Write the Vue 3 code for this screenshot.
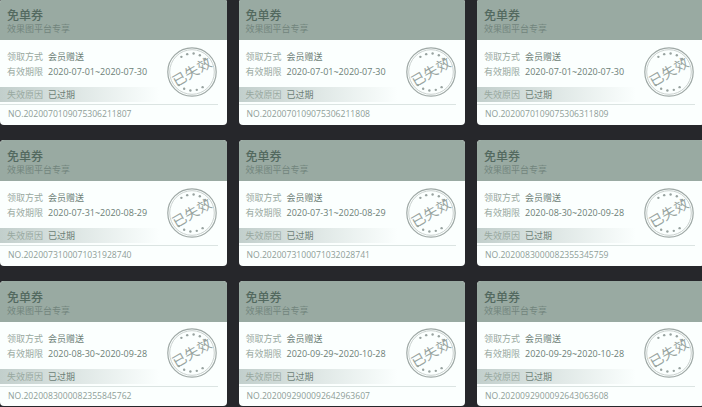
<template>
  <div class="page">
    <div v-for="c in coupons" :key="c.no" class="coupon">
      <div class="coupon-head">
        <div class="title">免单券</div>
        <div class="sub">效果图平台专享</div>
      </div>
      <div class="coupon-body">
        <div class="row">
          <span class="label">领取方式</span>
          <span class="value">会员赠送</span>
        </div>
        <div class="row">
          <span class="label">有效期限</span>
          <span class="value">{{ c.date }}</span>
        </div>
        <div class="row reason">
          <span class="label">失效原因</span>
          <span class="value">已过期</span>
        </div>
        <div class="no">NO.{{ c.no }}</div>
        <svg class="stamp" viewBox="0 0 50 50">
          <circle cx="25" cy="25" r="24.2" fill="none" stroke="#9fa9a6" stroke-width="1.2" />
          <circle cx="25" cy="25" r="22.3" fill="none" stroke="#b4bdba" stroke-width="0.7" />
          <circle v-for="(d, i) in dots" :key="i" :cx="d.x" :cy="d.y" r="1.2" fill="#98a3a0" />
          <text x="25" y="30" text-anchor="middle" transform="rotate(-30 25 25)" class="stamp-text">已失效</text>
        </svg>
      </div>
    </div>
  </div>
</template>

<script setup>
const list = [
  ['2020-07-01~2020-07-30', '2020070109075306211807'],
  ['2020-07-01~2020-07-30', '2020070109075306211808'],
  ['2020-07-01~2020-07-30', '2020070109075306311809'],
  ['2020-07-31~2020-08-29', '2020073100071031928740'],
  ['2020-07-31~2020-08-29', '2020073100071032028741'],
  ['2020-08-30~2020-09-28', '2020083000082355345759'],
  ['2020-08-30~2020-09-28', '2020083000082355845762'],
  ['2020-09-29~2020-10-28', '2020092900092642963607'],
  ['2020-09-29~2020-10-28', '2020092900092643063608']
]

const coupons = list.map(([date, no]) => ({ date, no }))

// dots sit in two arcs, above and below the stamp text
const dots = [-125, -105, -85, -65, -45, 55, 75, 95, 115, 135].map((deg) => {
  const rad = (deg * Math.PI) / 180
  return { x: 25 + 18.5 * Math.cos(rad), y: 25 + 18.5 * Math.sin(rad) }
})
</script>

<style>
html,
body {
  margin: 0;
  background: #26272b;
  overflow: hidden;
}
</style>

<style scoped>
.page {
  display: grid;
  grid-template-columns: repeat(3, 226.5px);
  column-gap: 12px;
  row-gap: 15.3px;
  margin-top: -0.7px;
  font-family: "Noto Sans CJK SC", "Noto Sans", sans-serif;
}

.coupon {
  height: 125.5px;
  border-radius: 4px;
  overflow: hidden;
  background: #fbfffe;
  display: flex;
  flex-direction: column;
}

.coupon-head {
  height: 41px;
  background: #99aaa2;
  padding: 8px 0 0 7px;
  box-sizing: border-box;
  flex-shrink: 0;
}

.title {
  font-size: 12px;
  line-height: 16px;
  font-weight: 500;
  color: #53695f;
}

.sub {
  font-size: 9px;
  line-height: 12px;
  color: #72857d;
}

.coupon-body {
  position: relative;
  padding-top: 9px;
}

.row {
  display: flex;
  gap: 5px;
  padding-left: 7px;
  height: 15px;
  align-items: center;
  font-size: 9px;
}

.label {
  color: #98a89f;
}

.value {
  color: #6c7e76;
  font-family: "Open Sans", "Noto Sans CJK SC", sans-serif;
}

.reason {
  margin-top: 8px;
  background: linear-gradient(90deg, #c2cfcc, #fbfffe 70%);
}

.no {
  margin: 2px 9px 0 0;
  padding: 2px 0 0 8px;
  border-top: 1px solid #dbe4e2;
  font-family: "Open Sans", "Noto Sans", sans-serif;
  font-size: 8.6px;
  line-height: 14px;
  color: #8f9e98;
}

.stamp {
  position: absolute;
  left: 167px;
  top: 6.5px;
  width: 50px;
  height: 50px;
}

.stamp-text {
  font-size: 14px;
  fill: #98a4a0;
  letter-spacing: 0.3px;
}
</style>
